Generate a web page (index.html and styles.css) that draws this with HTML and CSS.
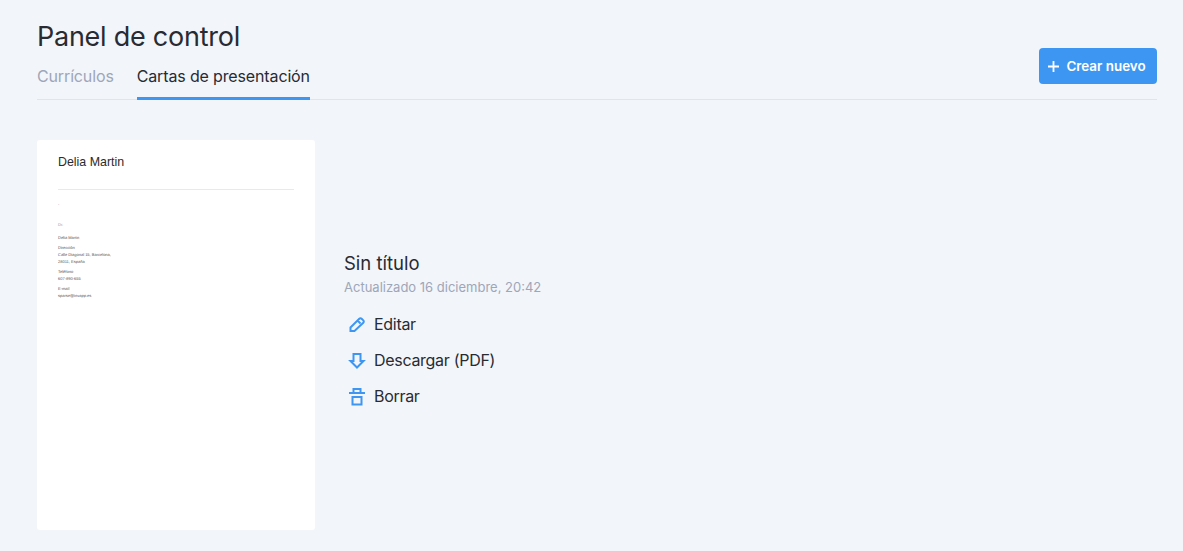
FILE: index.html
```html
<!DOCTYPE html>
<html lang="es">
<head>
  <meta charset="UTF-8" />
  <title>Panel de control</title>
  <link rel="stylesheet" href="styles.css">
</head>
<body>

  <div class="page">
    <!-- Header -->
    <div class="header">
      <div>
        <h1>Panel de control</h1>
        <div class="tabs">
          <a class="tab">Currículos</a>
          <a class="tab active">Cartas de presentación</a>
        </div>
      </div>
      <button class="create">
        <svg width="11" height="11" viewBox="0 0 11 11"><path d="M5.500 0v11M0 5.500h11" stroke="#fff" stroke-width="1.8" fill="none"/></svg>
        Crear nuevo
      </button>
    </div>

    <!-- Document -->
    <div class="doc">
      <div class="sheet">
        <div class="sheet-name">Delia Martin</div>
        <div class="sheet-line"></div>
        <div class="mini dot">.</div>
        <div class="mini to">Dr.</div>
        <div class="mini">Delia Martin</div>
        <div class="mini gap">Dirección</div>
        <div class="mini">Calle Diagonal 15, Barcelona,</div>
        <div class="mini">28011, España</div>
        <div class="mini gap">Teléfono</div>
        <div class="mini">607-890-655</div>
        <div class="mini gap">E-mail</div>
        <div class="mini">sparse@invapp.es</div>
      </div>

      <div class="info">
        <div class="doc-title">Sin título</div>
        <div class="doc-date">Actualizado 16 diciembre, 20:42</div>
        <a class="action">
          <svg width="20" height="20" viewBox="0 0 20 20"><path d="M3.500 17v-3.500L12.300 4.700a1.600 1.600 0 0 1 2.300 0l1.700 1.700a1.600 1.600 0 0 1 0 2.300L7.500 17ZM10.500 6.500l3 3" fill="none" stroke="#3d97f2" stroke-width="2"/></svg>
          Editar
        </a>
        <a class="action">
          <svg width="20" height="20" viewBox="0 0 20 20"><path d="M6.500 4h7v7h3L10 17.500 3.500 11h3Z" fill="none" stroke="#3d97f2" stroke-width="2"/></svg>
          Descargar (PDF)
        </a>
        <a class="action">
          <svg width="20" height="20" viewBox="0 0 20 20"><path d="M2 7h16M6.500 7V3h7v4M5.500 11h9v7.500h-9Z" fill="none" stroke="#3d97f2" stroke-width="2"/></svg>
          Borrar
        </a>
      </div>
    </div>
  </div>

</body>
</html>
```

FILE: styles.css
```css
* {
  box-sizing: border-box;
  padding: 0;
  margin: 0;
  font-family: 'Inter', sans-serif;
}

body {
  background: #f2f5fa;
  color: #282b32;
  height: 551px;
  overflow: hidden;
}

.page {
  padding: 19px 26px 0 37px;
}

.header {
  display: flex;
  justify-content: space-between;
  align-items: flex-end;
  border-bottom: 1px solid #dfe4ee;
  height: 81px;
}

h1 {
  font-size: 27px;
  font-weight: 400;
  line-height: 36px;
  letter-spacing: -0.25px;
}

.tabs {
  display: flex;
  gap: 23px;
  margin-top: 11px;
}

.tab {
  font-size: 16px;
  line-height: 20px;
  letter-spacing: -0.14px;
  padding-bottom: 11px;
  color: #9ea6b8;
  border-bottom: 3px solid transparent;
  margin-bottom: -1px;
}

.tab.active {
  color: #282b32;
  border-bottom-color: #3d97f2;
}

.create {
  width: 118px;
  height: 36px;
  margin-bottom: 15px;
  padding-right: 2px;
  display: flex;
  align-items: center;
  justify-content: center;
  gap: 7px;
  border: none;
  border-radius: 4px;
  background: #3d97f2;
  color: #fff;
  font-size: 13.4px;
  font-weight: 600;
}

.doc {
  display: flex;
  align-items: center;
  gap: 29px;
  margin-top: 40px;
}

.sheet {
  width: 278px;
  height: 390px;
  padding: 15px 21px;
  background: #fff;
  border-radius: 3px;
  flex-shrink: 0;
}

.sheet-name {
  font-family: 'Liberation Sans', sans-serif;
  font-size: 12.4px;
  line-height: 15px;
  color: #2b2b2b;
}

.sheet-line {
  height: 1px;
  width: 236px;
  background: #e9e9e9;
  margin: 19px 0 11px;
}

.mini {
  font-family: 'Liberation Sans', sans-serif;
  font-size: 4px;
  line-height: 7px;
  color: #555;
  text-rendering: geometricPrecision;
}

.dot {
  color: #777;
  font-size: 5px;
}

.to {
  color: #999;
  margin: 13px 0 6px;
}

.gap {
  margin-top: 3px;
}

.info {
  padding-bottom: 6px;
}

.doc-title {
  font-size: 18.5px;
  line-height: 24px;
}

.doc-date {
  font-size: 13px;
  line-height: 20px;
  color: #9ea6b8;
  margin-top: 2px;
  margin-bottom: 9px;
}

.action {
  display: flex;
  align-items: center;
  gap: 7px;
  height: 36px;
  font-size: 16px;
  letter-spacing: -0.3px;
  padding-left: 3px;
}
```
